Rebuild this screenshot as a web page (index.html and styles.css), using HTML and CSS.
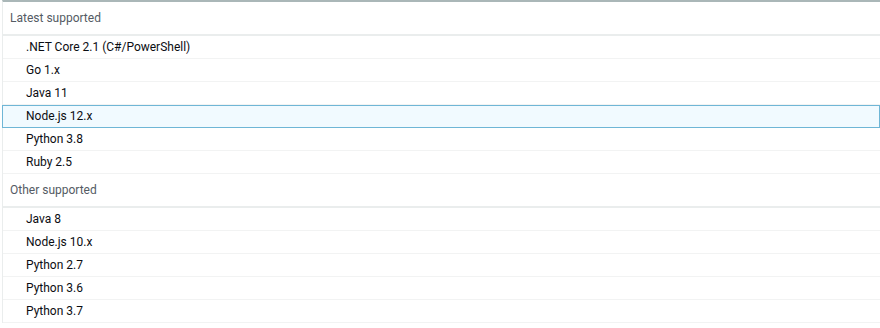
FILE: index.html
```html
<!DOCTYPE html>
<html lang="en">
<head>
  <meta charset="UTF-8" />
  <title>Runtime</title>
  <link rel="stylesheet" href="styles.css">
</head>
<body>
  <div class="page">
    <!-- Runtime dropdown -->
    <ul class="dropdown">
      <li class="group-label">Latest supported</li>
      <li class="option">.NET Core 2.1 (C#/PowerShell)</li>
      <li class="option">Go 1.x</li>
      <li class="option">Java 11</li>
      <li class="option highlighted">Node.js 12.x</li>
      <li class="option">Python 3.8</li>
      <li class="option">Ruby 2.5</li>
      <li class="group-label">Other supported</li>
      <li class="option">Java 8</li>
      <li class="option">Node.js 10.x</li>
      <li class="option">Python 2.7</li>
      <li class="option">Python 3.6</li>
      <li class="option">Python 3.7</li>
    </ul>
  </div>
</body>
</html>
```

FILE: styles.css
```css
body {
  margin: 0;
  padding: 0;
  background-color: #fff;
  font-family: Roboto, 'Liberation Sans', Arial, sans-serif;
  font-size: 12px;
  color: #16191f;
}

.page {
  padding-left: 2px;
}

.dropdown {
  list-style: none;
  margin: 0;
  padding: 0;
  border-top: 2px solid #aab7b8;
  border-left: 1px solid #eaeded;
  background-color: #fff;
}

.group-label {
  height: 32px;
  line-height: 32px;
  padding-left: 7px;
  color: #545b64;
  border-bottom: 2px solid #eaeded;
}

.option {
  height: 22px;
  line-height: 22px;
  padding-left: 23px;
  border-bottom: 1px solid #f2f3f3;
  color: #0b0d12;
}

.option.highlighted {
  background-color: #f1faff;
  border: 1px solid #6fb6d6;
  height: 21px;
  line-height: 21px;
  padding-left: 23px;
  margin-left: -1px;
}
```
